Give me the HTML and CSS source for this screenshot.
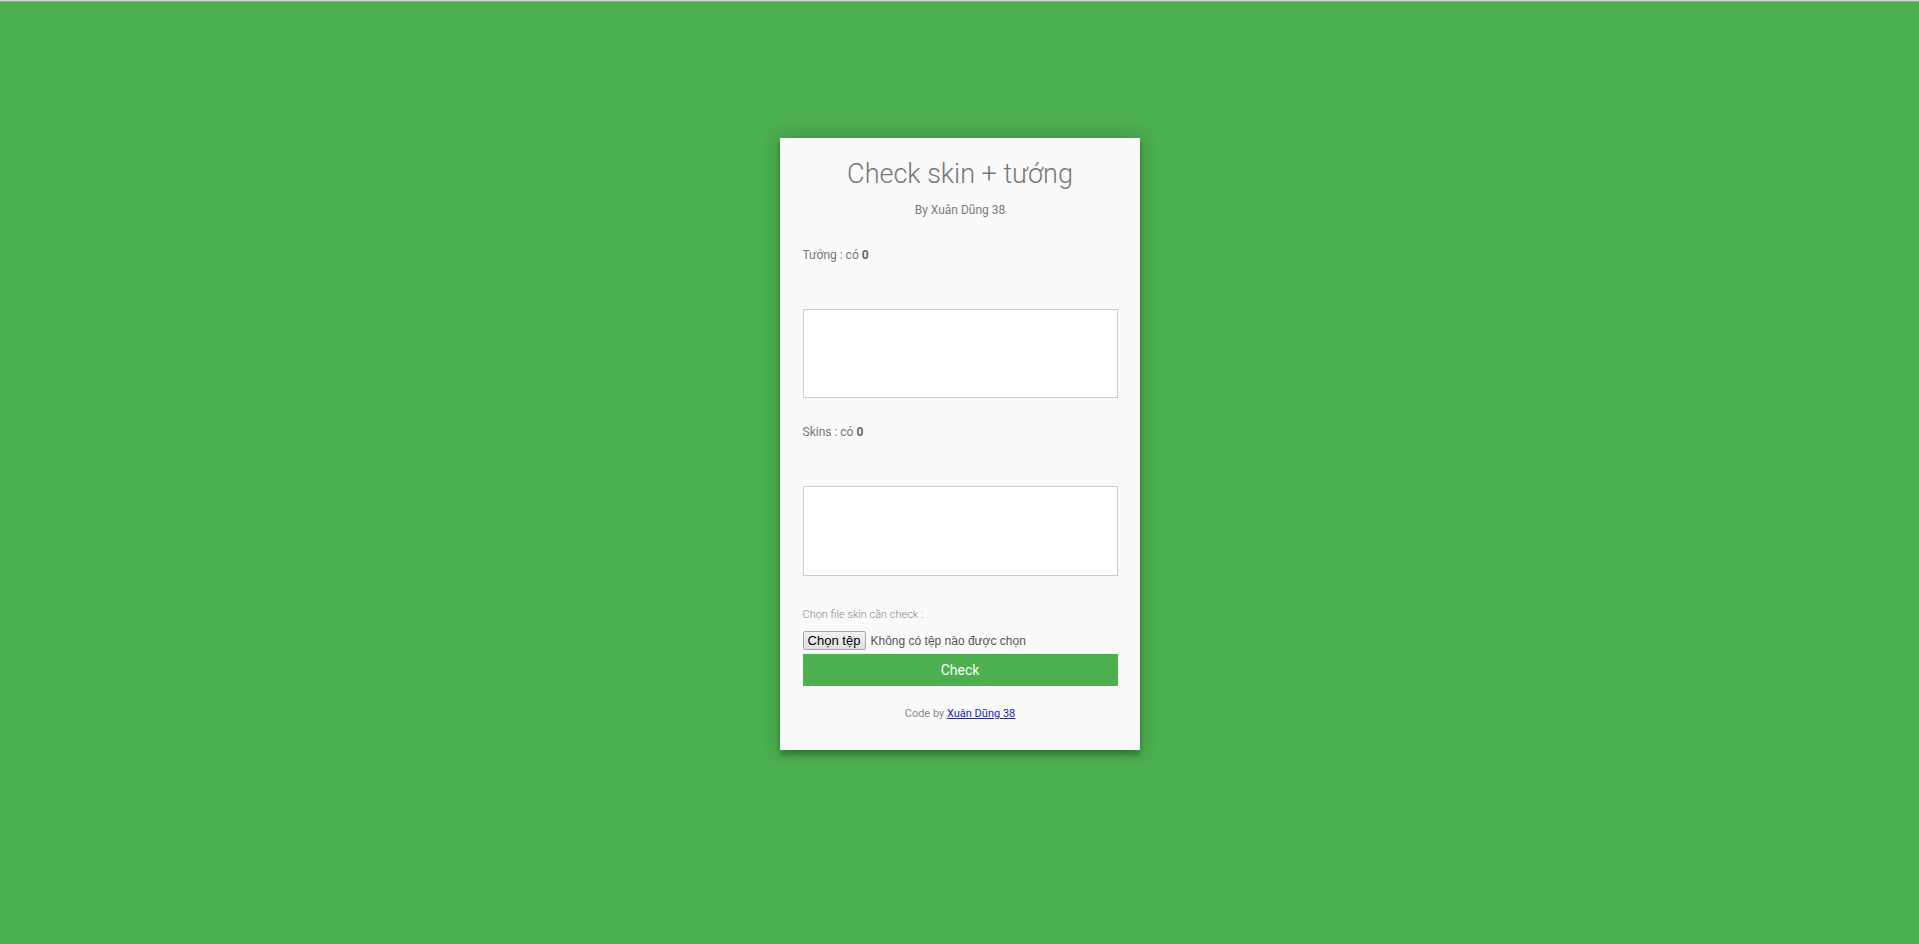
FILE: index.html
```html
<!DOCTYPE html>
<html lang="vi">
<head>
<meta charset="utf-8">
<title>Check skin + tướng</title>
<link rel="stylesheet" href="styles.css">
</head>
<body>
<div class="topstrip"></div>
<main class="page">
  <section class="card">
    <h1 class="title">Check skin + tướng</h1>
    <p class="subtitle">By Xuân Dũng 38</p>
    <p class="label label-first">Tướng : có <b>0</b></p>
    <textarea class="box box-1"></textarea>
    <p class="label label-second">Skins : có <b>0</b></p>
    <textarea class="box box-2"></textarea>
    <p class="hint">Chọn file skin cần check :</p>
    <label class="file">
      <input type="file" class="file-input">
      <span class="file-btn">Chọn tệp</span>
      <span class="file-name">Không có tệp nào được chọn</span>
    </label>
    <button class="check">Check</button>
    <p class="footer">Code by <a href="#">Xuân Dũng 38</a></p>
  </section>
</main>
</body>
</html>
```
FILE: styles.css
```css
html, body {
  margin: 0;
  padding: 0;
}
body {
  background: #4CAF50;
  font-family: Roboto, "Liberation Sans", sans-serif;
  min-height: 944px;
}
.topstrip {
  height: 1px;
  background: #d6d6d6;
  border-bottom: 1px solid #9e9e9e;
}
.page {
  display: flex;
  justify-content: center;
  padding-top: 136px;
}
.card {
  width: 360px;
  box-sizing: border-box;
  background: #FAFAFA;
  padding: 20px 22px 29px 23px;
  display: flex;
  flex-direction: column;
  box-shadow: 0 0 20px 0 rgba(0,0,0,0.2), 0 5px 5px 0 rgba(0,0,0,0.24);
}
.title {
  margin: 0;
  font-size: 27px;
  line-height: 32px;
  font-weight: 300;
  color: #777;
  text-align: center;
}
.subtitle {
  margin: 12px 0 0;
  font-size: 12px;
  line-height: 16px;
  font-weight: 400;
  color: #7a7a7a;
  text-align: center;
}
.label {
  margin: 0;
  font-size: 12px;
  line-height: 16px;
  color: #777;
}
.label b {
  color: #666;
  font-weight: 700;
}
.label-first { margin-top: 29px; }
.label-second { margin-top: 26px; }
.box {
  display: block;
  box-sizing: border-box;
  width: 315px;
  margin: 46px 0 0;
  border: 1px solid #ccc;
  background: #fff;
  resize: none;
  padding: 0;
  outline: none;
}
.box-1 { height: 89px; }
.box-2 { height: 90px; }
.hint {
  margin: 32px 0 0;
  font-size: 11px;
  line-height: 13px;
  font-weight: 300;
  color: #888;
}
.file {
  margin-top: 10px;
  display: flex;
  align-items: center;
  height: 19px;
  font-family: "Liberation Sans", Arial, sans-serif;
}
.file-input {
  display: none;
}
.file-btn {
  box-sizing: border-box;
  height: 19px;
  width: 63px;
  display: flex;
  align-items: center;
  justify-content: center;
  font-size: 13px;
  color: #000;
  background: linear-gradient(#f2f2f2, #e0e0e0);
  border: 1px solid #a6a6a6;
  border-radius: 2px;
}
.file-name {
  margin-left: 5px;
  font-size: 12px;
  color: #555;
}
.check {
  margin-top: 4px;
  height: 32px;
  width: 315px;
  border: 0;
  padding: 0;
  background: #4CAF50;
  color: #fff;
  font-family: Roboto, "Liberation Sans", sans-serif;
  font-size: 14px;
  font-weight: 400;
  cursor: pointer;
}
.footer {
  margin: 21px 0 0;
  font-size: 11px;
  line-height: 14px;
  color: #888;
  text-align: center;
}
.footer a {
  color: #2222cc;
}
```
